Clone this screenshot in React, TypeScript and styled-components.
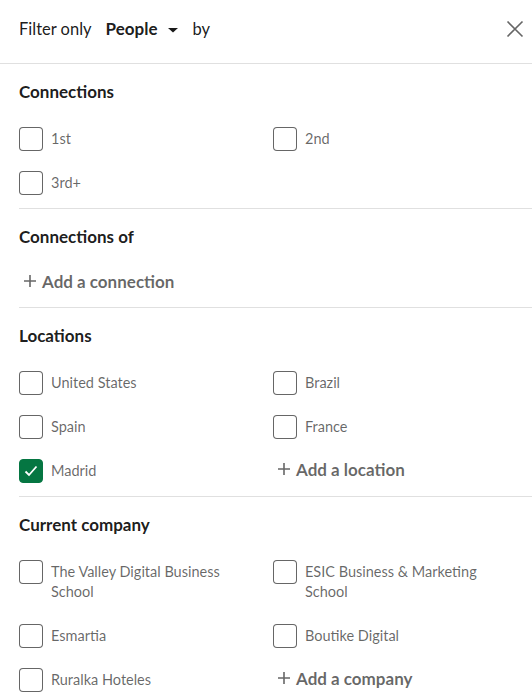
import styled, { createGlobalStyle } from 'styled-components';

const GlobalStyle = createGlobalStyle`
  html, body {
    margin: 0;
    padding: 0;
    background: #fff;
  }
  body {
    font-family: Lato, "Noto Sans", sans-serif;
    color: rgba(0, 0, 0, 0.9);
  }
  * {
    box-sizing: border-box;
  }
`;

type Option = { label: string; checked?: boolean };

type Section = {
  title: string;
  options: Option[];
  addLabel?: string;
};

const sections: Section[] = [
  {
    title: 'Connections',
    options: [{ label: '1st' }, { label: '2nd' }, { label: '3rd+' }],
  },
  {
    title: 'Connections of',
    options: [],
    addLabel: 'Add a connection',
  },
  {
    title: 'Locations',
    options: [
      { label: 'United States' },
      { label: 'Brazil' },
      { label: 'Spain' },
      { label: 'France' },
      { label: 'Madrid', checked: true },
    ],
    addLabel: 'Add a location',
  },
  {
    title: 'Current company',
    options: [
      { label: 'The Valley Digital Business School' },
      { label: 'ESIC Business & Marketing School' },
      { label: 'Esmartia' },
      { label: 'Boutike Digital' },
      { label: 'Ruralka Hoteles' },
    ],
    addLabel: 'Add a company',
  },
];

const PlusIcon = () => (
  <svg width="16" height="16" viewBox="0 0 16 16" aria-hidden="true">
    <path d="M8 2v12M2 8h12" stroke="currentColor" strokeWidth="1.6" fill="none" />
  </svg>
);

const App = () => {
  return (
    <>
      <GlobalStyle />
      <Panel>
        <Header>
          <HeaderText>
            Filter only
            <TypeSelect>
              People
              <svg width="12" height="8" viewBox="0 0 12 8" aria-hidden="true">
                <path d="M1 2h10L6 6.5z" fill="currentColor" />
              </svg>
            </TypeSelect>
            by
          </HeaderText>
          <CloseButton aria-label="Close">
            <svg width="18" height="18" viewBox="0 0 18 18" aria-hidden="true">
              <path
                d="M1.5 1.5l15 15M16.5 1.5l-15 15"
                stroke="currentColor"
                strokeWidth="1.6"
                fill="none"
              />
            </svg>
          </CloseButton>
        </Header>

        {sections.map(section => (
          <SectionBlock key={section.title}>
            <SectionTitle>{section.title}</SectionTitle>
            {section.options.length > 0 ? (
              <OptionGrid>
                {section.options.map(option => (
                  <OptionRow key={option.label}>
                    <Box checked={option.checked}>
                      {option.checked && (
                        <svg width="18" height="18" viewBox="0 0 18 18" aria-hidden="true">
                          <path
                            d="M3.5 9.5l3.5 3.5 7.5-8.5"
                            stroke="#fff"
                            strokeWidth="1.8"
                            fill="none"
                          />
                        </svg>
                      )}
                    </Box>
                    <OptionLabel>{option.label}</OptionLabel>
                  </OptionRow>
                ))}
                {section.addLabel && (
                  <AddCell>
                    <AddButton>
                      <PlusIcon />
                      {section.addLabel}
                    </AddButton>
                  </AddCell>
                )}
              </OptionGrid>
            ) : (
              section.addLabel && (
                <SoloAdd>
                  <AddButton>
                    <PlusIcon />
                    {section.addLabel}
                  </AddButton>
                </SoloAdd>
              )
            )}
          </SectionBlock>
        ))}
      </Panel>
    </>
  );
};

export default App;

const Panel = styled.div`
  width: 532px;
  height: 700px;
  overflow: hidden;
  background: #fff;
`;

const Header = styled.div`
  height: 64px;
  display: flex;
  align-items: center;
  justify-content: space-between;
  padding: 0 5px 6px 19px;
  border-bottom: 1px solid #e0e0e0;
`;

const HeaderText = styled.div`
  display: flex;
  align-items: center;
  gap: 14px;
  font-size: 16.5px;
  color: rgba(0, 0, 0, 0.9);
`;

const TypeSelect = styled.span`
  display: inline-flex;
  align-items: center;
  gap: 9px;
  font-size: 17px;
  font-weight: 700;

  svg {
    margin-top: 2px;
  }
`;

const CloseButton = styled.button`
  width: 24px;
  height: 24px;
  padding: 0;
  border: none;
  background: none;
  color: #666;
  display: flex;
  align-items: center;
  justify-content: center;
`;

const SectionBlock = styled.section`
  margin-left: 19px;
  padding: 16px 0 3px;
  border-bottom: 1px solid #e0e0e0;
`;

const SectionTitle = styled.h3`
  margin: 0;
  font-size: 17px;
  line-height: 24px;
  font-weight: 700;
  color: rgba(0, 0, 0, 0.9);
`;

const OptionGrid = styled.div`
  margin-top: 13px;
  display: grid;
  grid-template-columns: 254px 254px;
`;

const OptionRow = styled.label`
  display: flex;
  align-items: flex-start;
  gap: 8px;
  padding: 10px 24px 10px 0;
`;

const Box = styled.span<{ checked?: boolean }>`
  flex: none;
  width: 24px;
  height: 24px;
  border-radius: 4px;
  border: 1px solid ${props => (props.checked ? '#057642' : 'rgba(0, 0, 0, 0.6)')};
  background: ${props => (props.checked ? '#057642' : '#fff')};
  display: flex;
  align-items: center;
  justify-content: center;
`;

const OptionLabel = styled.span`
  padding: 2px 0;
  font-size: 14.5px;
  line-height: 20px;
  color: rgba(0, 0, 0, 0.6);
`;

const AddCell = styled.div`
  display: flex;
  align-items: center;
  height: 44px;

  button {
    margin-top: -4px;
  }
`;

const SoloAdd = styled.div`
  margin-top: 12px;
  height: 43px;
  display: flex;
  align-items: center;
  padding-bottom: 3px;
`;

const AddButton = styled.button`
  display: inline-flex;
  align-items: center;
  gap: 4px;
  padding: 0 0 0 3px;
  border: none;
  background: none;
  font-family: inherit;
  font-size: 17px;
  font-weight: 700;
  color: rgba(0, 0, 0, 0.6);
`;
